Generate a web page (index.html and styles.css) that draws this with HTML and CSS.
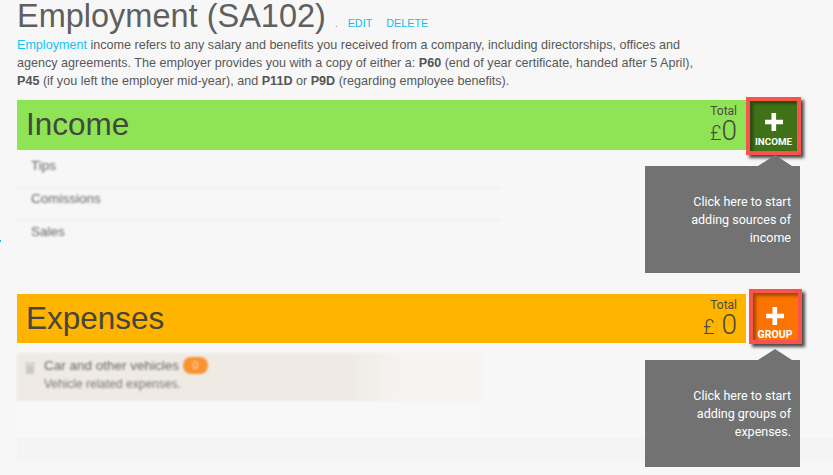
FILE: index.html
```html
<!DOCTYPE html>
<html lang="en">
<head>
<meta charset="utf-8">
<title>Employment (SA102)</title>
<link rel="stylesheet" href="styles.css">
</head>
<body>
<span class="stray-dot"></span>
<header class="page-head">
  <div class="title-row">
    <h1 class="title">Employment (SA102)</h1>
    <span class="title-dot">.</span>
    <a class="title-link">EDIT</a>
    <a class="title-link">DELETE</a>
  </div>
  <p class="intro"><a class="intro-link">Employment</a> income refers to any salary and benefits you received from a company, including directorships, offices and agency agreements. The employer provides you with a copy of either a: <b>P60</b> (end of year certificate, handed after 5 April), <b>P45</b> (if you left the employer mid-year), and <b>P11D</b> or <b>P9D</b> (regarding employee benefits).</p>
</header>

<section class="section section-income">
  <div class="section-head">
    <div class="bar bar-income">
      <h2 class="bar-title">Income</h2>
      <div class="total">
        <div class="total-label">Total</div>
        <div class="total-value"><span class="pound">£</span>0</div>
      </div>
    </div>
    <button class="add add-income">
      <svg class="plus" width="20" height="20" viewBox="0 0 20 20"><path d="M7.500 1h4.600v6.800H19v4.400h-6.900V19H7.500v-6.800H1V7.800h6.500z" fill="#fff"/></svg>
      <span class="add-label">INCOME</span>
    </button>
  </div>
  <ul class="blur-list">
    <li class="blur-row">Tips</li>
    <li class="blur-row">Comissions</li>
    <li class="blur-row">Sales</li>
  </ul>
  <div class="tip">Click here to start adding sources of income</div>
</section>

<section class="section section-expenses">
  <div class="section-head">
    <div class="bar bar-expenses">
      <h2 class="bar-title">Expenses</h2>
      <div class="total">
        <div class="total-label">Total</div>
        <div class="total-value"><span class="pound pound-gap">£</span>0</div>
      </div>
    </div>
    <button class="add add-expenses">
      <svg class="plus" width="20" height="20" viewBox="0 0 20 20"><path d="M7.500 1h4.600v6.800H19v4.400h-6.900V19H7.500v-6.800H1V7.800h6.500z" fill="#fff"/></svg>
      <span class="add-label">GROUP</span>
    </button>
  </div>
  <div class="group">
    <div class="group-row">
      <svg class="trash" width="10" height="12" viewBox="0 0 10 12"><path d="M0 0.500h10V2H0zM1 3h8v9H1z" fill="#c8c8c4"/></svg>
      <div class="group-text">
        <div class="group-name">Car and other vehicles <span class="pill">0</span></div>
        <div class="group-desc">Vehicle related expenses.</div>
      </div>
    </div>
    <div class="group-empty"></div>
    <div class="group-foot"></div>
  </div>
  <div class="tip">Click here to start adding groups of expenses.</div>
</section>
</body>
</html>
```
FILE: styles.css
```css
* { box-sizing: border-box; }
html, body { margin: 0; height: 475px; overflow: hidden; }
body {
  background: #f7f7f7;
  color: #555;
  font-family: "Liberation Sans", Arial, sans-serif;
  padding-left: 17px;
  position: relative;
}
.stray-dot {
  position: absolute; left: 0; top: 240px;
  width: 1px; height: 2px; background: #00c8f0;
}
.page-head { width: 700px; }
.title-row { display: flex; align-items: baseline; height: 36px; }
.title {
  margin: 0;
  font-size: 32.5px;
  line-height: 32px;
  font-weight: 400;
  color: #5f5f5f;
  white-space: nowrap;
}
.title-dot { margin-left: 9px; font-size: 10px; color: #b08060; }
.title-link {
  margin-left: 14px;
  font-size: 10.8px;
  color: #12bdea;
}
.title-dot + .title-link { margin-left: 10px; }
.intro {
  margin: 0;
  font-size: 12.58px;
  line-height: 18px;
  color: #585858;
  width: 690px;
}
.intro-link { color: #12c4f4; }
.intro b { font-weight: 700; color: #555; }

.section { position: relative; }
.section-income { margin-top: 10px; height: 194px; }
.section-head { display: flex; align-items: flex-start; }
.bar {
  width: 729px;
  display: flex;
  justify-content: space-between;
  align-items: center;
  padding: 0 9px;
}
.bar-income { height: 50px; background: #8ee455; }
.bar-expenses { height: 49px; background: #ffb400; }
.bar-title {
  margin: 0 0 2px;
  font-size: 31.5px;
  font-weight: 400;
  line-height: 46px;
  color: #44473d;
}
.total { text-align: right; color: #4a4a40; font-family: Roboto, sans-serif; padding-top: 1px; }
.total-label { font-size: 12px; line-height: 13px; font-weight: 400; }
.total-value { font-size: 28px; line-height: 25px; font-weight: 300; }
.pound { font-size: 20px; font-weight: 300; }
.pound-gap { margin-right: 7px; }

.add {
  display: flex;
  flex-direction: column;
  align-items: center;
  padding: 0;
  width: 55px;
  height: 58px;
  border: 4px solid #f9534d;
  box-shadow: 3px 3px 3px #4a4a4a, inset 3px 3px 3px rgba(0,0,0,.35);
  color: #fff;
  font-family: Roboto, sans-serif;
  cursor: pointer;
}
.add-income { margin-top: -3px; padding-top: 11px; background: #3f7216; }
.add-expenses { margin: -5px 0 0 3px; padding: 13px 1px 0 0; width: 53px; height: 55px; background: #fb7300; }
.plus { display: block; flex: none; }
.add-label { font-weight: 700; }
.add-income .add-label { font-size: 9.8px; line-height: 10px; margin-top: 5px; }
.add-expenses .add-label { font-size: 10.5px; line-height: 10px; margin-top: 4px; }

.blur-list {
  list-style: none;
  margin: 0;
  padding: 0;
  width: 484px;
  filter: blur(1px);
}
.blur-row {
  height: 33px;
  padding: 4px 0 0 14px;
  font-size: 13.5px;
  line-height: 14px;
  color: #666;
  border-bottom: 1px solid #eee;
}
.blur-row:last-child { border-bottom: 0; }

.tip {
  position: absolute;
  top: 66px;
  left: 628px;
  width: 155px;
  height: 107px;
  padding: 27px 9px 0 40px;
  background: #727272;
  color: #fff;
  font-family: Roboto, sans-serif;
  font-size: 12.5px;
  line-height: 18px;
  text-align: right;
}
.tip::before {
  content: "";
  position: absolute;
  top: -11px;
  left: 113px;
  border-left: 17px solid transparent;
  border-right: 17px solid transparent;
  border-bottom: 11px solid #727272;
}

.group { width: 816px; margin-top: 9px; }
.group-row {
  height: 48px;
  width: 464px;
  display: flex;
  gap: 9px;
  padding: 4px 0 0 8px;
  background: linear-gradient(90deg, #efebe4 0, #efebe4 335px, #f5f4f1 385px, #f5f4f1 100%);
  filter: blur(1px);
}
.trash { margin-top: 5px; flex: none; }
.group-name { font-size: 13.5px; line-height: 17px; color: #666; white-space: nowrap; }
.group-desc { font-size: 12px; line-height: 14px; margin-top: 3px; color: #777; }
.pill {
  display: inline-block;
  background: #fb9231;
  color: #fbe3c8;
  border-radius: 8px;
  width: 25px;
  height: 17px;
  text-align: center;
  font-size: 11px;
  vertical-align: top;
}
.group-empty { height: 37px; width: 464px; background: #f8f8f8; }
.group-foot { height: 23px; background: #f4f4f4; }
```
